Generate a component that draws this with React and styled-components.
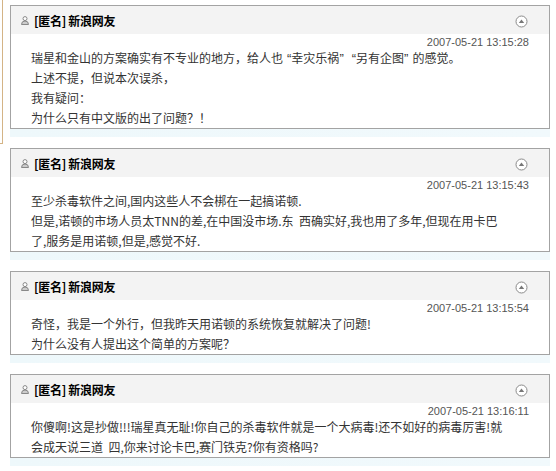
import React from "react";
import styled, { createGlobalStyle } from "styled-components";

const comments = [
  {
    author: "[匿名] 新浪网友",
    time: "2007-05-21 13:15:28",
    lines: [
      "瑞星和金山的方案确实有不专业的地方，给人也“幸灾乐祸”“另有企图”的感觉。",
      "上述不提，但说本次误杀，",
      "我有疑问：",
      "为什么只有中文版的出了问题？！",
    ],
  },
  {
    author: "[匿名] 新浪网友",
    time: "2007-05-21 13:15:43",
    lines: [
      "至少杀毒软件之间,国内这些人不会梆在一起搞诺顿.",
      "但是,诺顿的市场人员太TNN的差,在中国没市场.东  西确实好,我也用了多年,但现在用卡巴",
      "了,服务是用诺顿,但是,感觉不好.",
    ],
  },
  {
    author: "[匿名] 新浪网友",
    time: "2007-05-21 13:15:54",
    lines: [
      "奇怪，我是一个外行，但我昨天用诺顿的系统恢复就解决了问题!",
      "为什么没有人提出这个简单的方案呢？",
    ],
  },
  {
    author: "[匿名] 新浪网友",
    time: "2007-05-21 13:16:11",
    lines: [
      "你傻啊!这是抄做!!!瑞星真无耻!你自己的杀毒软件就是一个大病毒!还不如好的病毒厉害!就",
      "会成天说三道  四,你来讨论卡巴,赛门铁克?你有资格吗?",
    ],
  },
];

// curly quotes get a little room, as in the old SimSun page
const renderLine = (text) =>
  text.split(/([“”])/).map((part, i) =>
    part === "“" || part === "”" ? (
      <Quote key={i} $open={part === "“"}>
        {part}
      </Quote>
    ) : (
      part
    )
  );

const UserIcon = () => (
  <svg width="8" height="9" viewBox="0 0 8 9">
    <circle cx="4" cy="2.6" r="2" fill="#fff" stroke="#888" strokeWidth="1" />
    <path d="M0.5 8.5 Q0.5 5 4 5 Q7.5 5 7.5 8.5 Z" fill="#ccc" stroke="#888" strokeWidth="1" />
  </svg>
);

const CollapseIcon = () => (
  <svg width="13" height="13" viewBox="0 0 13 13">
    <circle cx="6.5" cy="6.5" r="5.5" fill="#fff" stroke="#8a8a8a" strokeWidth="1" />
    <path d="M3.8 8 L6.5 4.6 L9.2 8 Z" fill="#777" />
  </svg>
);

export default function App() {
  return (
    <>
      <GlobalStyle />
      <Page>
        <Edge />
        <List>
          {comments.map((c, i) => (
            <Item key={i}>
              <Card>
                <Header>
                  <UserIcon />
                  <Author>{c.author}</Author>
                  <Toggle>
                    <CollapseIcon />
                  </Toggle>
                </Header>
                <Body>
                  <Time>{c.time}</Time>
                  {c.lines.map((l, j) => (
                    <Line key={j}>{renderLine(l)}</Line>
                  ))}
                </Body>
              </Card>
              <Strip />
            </Item>
          ))}
        </List>
      </Page>
    </>
  );
}

const GlobalStyle = createGlobalStyle`
  body {
    margin: 0;
    background: #fff;
    font-family: "Noto Sans CJK SC", "Liberation Sans", sans-serif;
    font-size: 12px;
  }
`;

const Page = styled.div`
  display: flex;
  align-items: flex-start;
`;

const Edge = styled.div`
  width: 2px;
  height: 143px;
  border-right: 1px solid #d4b486;
  border-bottom: 1px solid #d4b486;
  flex-shrink: 0;
`;

const List = styled.div`
  margin-left: 7px;
  padding-top: 5px;
  width: 540px;
`;

const Item = styled.div`
  margin-bottom: 11px;
`;

const Card = styled.div`
  border: 1px solid #a3a3a3;
  background: #fff;
`;

const Header = styled.div`
  display: flex;
  align-items: center;
  height: 28px;
  padding: 0 21px 0 10px;
  background: #f3f3f3;
`;

const Author = styled.span`
  margin-left: 5px;
  font-weight: bold;
  color: #000;
  font-size: 12px;
  letter-spacing: -0.3px;
`;

const Toggle = styled.span`
  margin-left: auto;
  display: flex;
  margin-top: 2px;
`;

const Body = styled.div`
  padding: 0 20px 0 20px;
  color: #333;
`;

const Time = styled.div`
  height: 14px;
  line-height: 16px;
  text-align: right;
  font-family: "Liberation Sans", Arial, sans-serif;
  font-size: 11px;
  color: #555;
`;

const Line = styled.div`
  line-height: 20px;
  height: 20px;
  white-space: pre;
`;

const Quote = styled.span`
  font-family: "Liberation Sans", Arial, sans-serif;
  font-size: 13px;
  margin-left: ${(p) => (p.$open ? "4px" : "0")};
  margin-right: ${(p) => (p.$open ? "0" : "4px")};
`;

const Strip = styled.div`
  height: 8px;
  background: linear-gradient(to right, #eef8fb, #f1f9fc);
`;
